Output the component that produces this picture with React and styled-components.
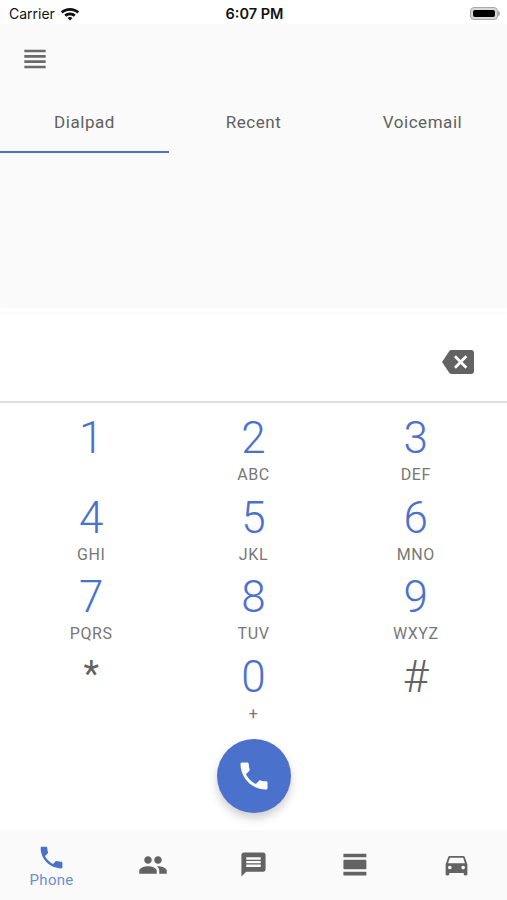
import React from 'react';
import styled, { createGlobalStyle } from 'styled-components';
import { MdPhone, MdPeople, MdMessage, MdViewDay, MdDirectionsCar, MdBackspace, MdViewHeadline } from 'react-icons/md';

const BLUE = '#4a72cc';
const GREY = '#636363';

const keys = [
    ['1', ''], ['2', 'ABC'], ['3', 'DEF'],
    ['4', 'GHI'], ['5', 'JKL'], ['6', 'MNO'],
    ['7', 'PQRS'], ['8', 'TUV'], ['9', 'WXYZ'],
    ['*', ''], ['0', '+'], ['#', ''],
];

const navItems = [
    { Icon: MdPhone, label: 'Phone', size: 29 },
    { Icon: MdPeople, size: 30 },
    { Icon: MdMessage, size: 29 },
    { Icon: MdViewDay, size: 29 },
    { Icon: MdDirectionsCar, size: 29 },
];

const WifiIcon = () => (
    <svg width="20" height="15" viewBox="0 0 20 15">
        <path fill="#111" d="M10 2C6.4 2 3.2 3.3.8 5.5l1.9 2C4.6 5.800 7.200 4.800 10 4.800s5.400 1 7.300 2.700l1.900-2C16.800 3.300 13.600 2 10 2z" />
        <path fill="#111" d="M10 6.600c-2.200 0-4.200.8-5.700 2.200l1.900 2c1-.9 2.400-1.400 3.800-1.400s2.800.5 3.800 1.400l1.900-2c-1.500-1.400-3.500-2.200-5.700-2.200z" />
        <path fill="#111" d="M10 11c-1 0-1.900.4-2.500.9L10 14.500l2.500-2.600c-.6-.5-1.500-.9-2.500-.9z" />
    </svg>
);

export default function App() {
    return (
        <>
            <GlobalStyle />
            <Screen>
                <StatusBar>
                    <Carrier>Carrier <WifiIcon /></Carrier>
                    <Clock>6:07 PM</Clock>
                    <BatteryWrap>
                        <Battery><BatteryFill /></Battery>
                        <BatteryNub />
                    </BatteryWrap>
                </StatusBar>

                <TopPanel>
                    <MenuRow><MdViewHeadline size={32} color="#6a6a6a" /></MenuRow>
                    <Tabs>
                        <Tab $active>Dialpad</Tab>
                        <Tab>Recent</Tab>
                        <Tab>Voicemail</Tab>
                    </Tabs>
                </TopPanel>

                <Dialer>
                    <NumberField><MdBackspace size={32} color={GREY} /></NumberField>
                    <KeyGrid>
                        {keys.map(([digit, letters]) => (
                            <Key key={digit}>
                                {digit === '*'
                                    ? <Star>{digit}</Star>
                                    : <Digit $symbol={digit === '#'}>{digit}</Digit>}
                                <Letters>{letters}</Letters>
                            </Key>
                        ))}
                    </KeyGrid>
                    <CallButton><MdPhone size={36} color="#fff" /></CallButton>
                </Dialer>

                <BottomNav>
                    {navItems.map(({ Icon, label, size }, index) => (
                        <NavItem key={index} $active={index === 0}>
                            <Icon size={size} />
                            {label && <NavLabel>{label}</NavLabel>}
                        </NavItem>
                    ))}
                </BottomNav>
            </Screen>
        </>
    );
}

const GlobalStyle = createGlobalStyle`
    html, body {
        margin: 0;
        padding: 0;
        background: #fff;
    }
    * {
        box-sizing: border-box;
    }
`;

const Screen = styled.div`
    width: 507px;
    height: 900px;
    overflow: hidden;
    display: flex;
    flex-direction: column;
    font-family: Roboto, "Liberation Sans", sans-serif;
    background: #fff;
`;

const StatusBar = styled.div`
    height: 24px;
    flex: none;
    display: grid;
    grid-template-columns: 1fr auto 1fr;
    align-items: center;
    padding: 3px 7px 0 9px;
    background: #fff;
    font-family: Inter, "Liberation Sans", sans-serif;
    color: #111;
`;

const Carrier = styled.div`
    display: flex;
    align-items: center;
    gap: 5px;
    font-size: 14px;
`;

const Clock = styled.div`
    font-size: 14.5px;
    font-weight: 600;
`;

const BatteryWrap = styled.div`
    justify-self: end;
    display: flex;
    align-items: center;
`;

const Battery = styled.div`
    width: 28px;
    height: 13px;
    padding: 2px;
    border: 1px solid #aaa;
    border-radius: 4px;
    background: #d8d8d8;
`;

const BatteryFill = styled.div`
    width: 100%;
    height: 100%;
    border-radius: 2px;
    background: #000;
`;

const BatteryNub = styled.div`
    width: 2px;
    height: 5px;
    border-radius: 0 2px 2px 0;
    background: #aaa;
`;

const TopPanel = styled.div`
    height: 284px;
    flex: none;
    background: #fafafa;
`;

const MenuRow = styled.div`
    height: 70px;
    padding: 19px 0 0 19px;
`;

const Tabs = styled.div`
    display: grid;
    grid-template-columns: repeat(3, 1fr);
`;

const Tab = styled.div`
    height: 59px;
    display: flex;
    align-items: center;
    justify-content: center;
    padding-bottom: 1px;
    font-size: 17px;
    font-weight: 400;
    letter-spacing: 0.55px;
    color: #606060;
    border-bottom: 2.5px solid ${props => props.$active ? BLUE : 'transparent'};
`;

const Dialer = styled.div`
    flex: 1;
    display: flex;
    flex-direction: column;
    margin-top: 6px;
    background: #fff;
    box-shadow: 0 -2px 3px rgba(0, 0, 0, 0.03);
`;

const NumberField = styled.div`
    height: 89px;
    flex: none;
    display: flex;
    align-items: center;
    justify-content: flex-end;
    padding: 8px 33px 0 0;
    border-bottom: 2px solid #dedede;
`;

const KeyGrid = styled.div`
    display: grid;
    grid-template-columns: 1fr 1fr 1fr;
    grid-auto-rows: 79.5px;
    padding: 10px 10px 0;
`;

const Key = styled.div`
    display: flex;
    flex-direction: column;
    align-items: center;
`;

const Digit = styled.div`
    font-size: 44px;
    font-weight: 300;
    line-height: 50px;
    color: ${props => props.$symbol ? GREY : BLUE};
`;

const Star = styled.div`
    font-size: 36px;
    font-weight: 400;
    line-height: 44px;
    color: ${GREY};
`;

const Letters = styled.div`
    margin-top: 2px;
    font-size: 16px;
    font-weight: 400;
    line-height: 20px;
    letter-spacing: 0.6px;
    color: #777;
`;

const CallButton = styled.div`
    width: 74px;
    height: 74px;
    flex: none;
    align-self: center;
    margin-top: 8px;
    display: flex;
    align-items: center;
    justify-content: center;
    border-radius: 50%;
    background: ${BLUE};
    box-shadow: 0 5px 10px rgba(0, 0, 0, 0.2);
`;

const BottomNav = styled.div`
    height: 70px;
    flex: none;
    display: grid;
    grid-template-columns: repeat(5, 1fr);
    padding-left: 1px;
    background: #fafafa;
`;

const NavItem = styled.div`
    display: flex;
    flex-direction: column;
    align-items: center;
    padding-top: ${props => props.$active ? '13px' : '20px'};
    color: ${props => props.$active ? BLUE : GREY};
`;

const NavLabel = styled.div`
    font-size: 15px;
    line-height: 17px;
    letter-spacing: 0.3px;
    opacity: 0.8;
`;
